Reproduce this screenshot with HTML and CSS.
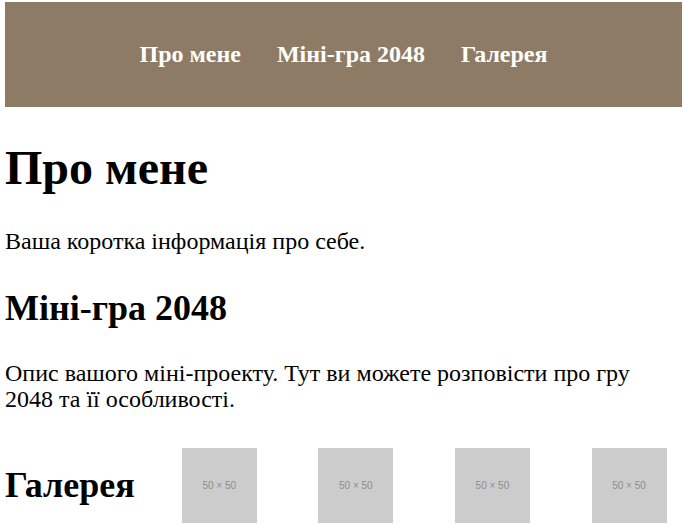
FILE: index.html
```html
<!DOCTYPE html>
<html lang="uk">
<head>
<meta charset="utf-8">
<title>Про мене</title>
<link rel="stylesheet" href="styles.css">
</head>
<body>
<header class="site-header">
  <nav class="nav">
    <a class="nav-link" href="#about">Про мене</a>
    <a class="nav-link" href="#game">Міні-гра 2048</a>
    <a class="nav-link" href="#gallery">Галерея</a>
  </nav>
</header>
<main class="content">
  <section id="about">
    <h1 class="title">Про мене</h1>
    <p class="text">Ваша коротка інформація про себе.</p>
  </section>
  <section id="game">
    <h2 class="subtitle">Міні-гра 2048</h2>
    <p class="text">Опис вашого міні-проекту. Тут ви можете розповісти про гру 2048 та її особливості.</p>
  </section>
  <section id="gallery" class="gallery">
    <h2 class="subtitle gallery-title">Галерея</h2>
    <div class="gallery-images">
      <div class="thumb">50 × 50</div>
      <div class="thumb">50 × 50</div>
      <div class="thumb">50 × 50</div>
      <div class="thumb">50 × 50</div>
    </div>
  </section>
</main>
</body>
</html>
```
FILE: styles.css
```css
html, body {
  margin: 0;
  padding: 0;
  background: #ffffff;
}
body {
  font-family: "Liberation Serif", "Times New Roman", serif;
  color: #000;
}
.site-header {
  margin: 2px 2px 0 5px;
  height: 105px;
  background: #8e7b65;
  display: flex;
  align-items: center;
  justify-content: center;
}
.nav {
  display: flex;
  gap: 36px;
}
.nav-link {
  color: #ffffff;
  text-decoration: none;
  font-weight: bold;
  font-size: 24px;
}
.content {
  padding: 0 2px 0 5px;
}
.title {
  font-size: 48px;
  font-weight: bold;
  margin: 33px 0 33px;
}
.text {
  font-size: 24px;
  line-height: 26px;
  margin: 0;
}
.subtitle {
  font-size: 36px;
  font-weight: bold;
  margin: 33px 0 31px;
}
.gallery {
  display: flex;
  align-items: center;
  margin-top: 36px;
}
.gallery-title {
  margin: 0 47px 0 0;
  position: relative;
  top: -1px;
}
.gallery-images {
  display: flex;
  gap: 61.6px;
}
.thumb {
  width: 75px;
  height: 75px;
  background: #cccccc;
  color: #8c8c8c;
  font-family: "Liberation Sans", "Open Sans", sans-serif;
  font-size: 10px;
  display: flex;
  align-items: center;
  justify-content: center;
}
```
